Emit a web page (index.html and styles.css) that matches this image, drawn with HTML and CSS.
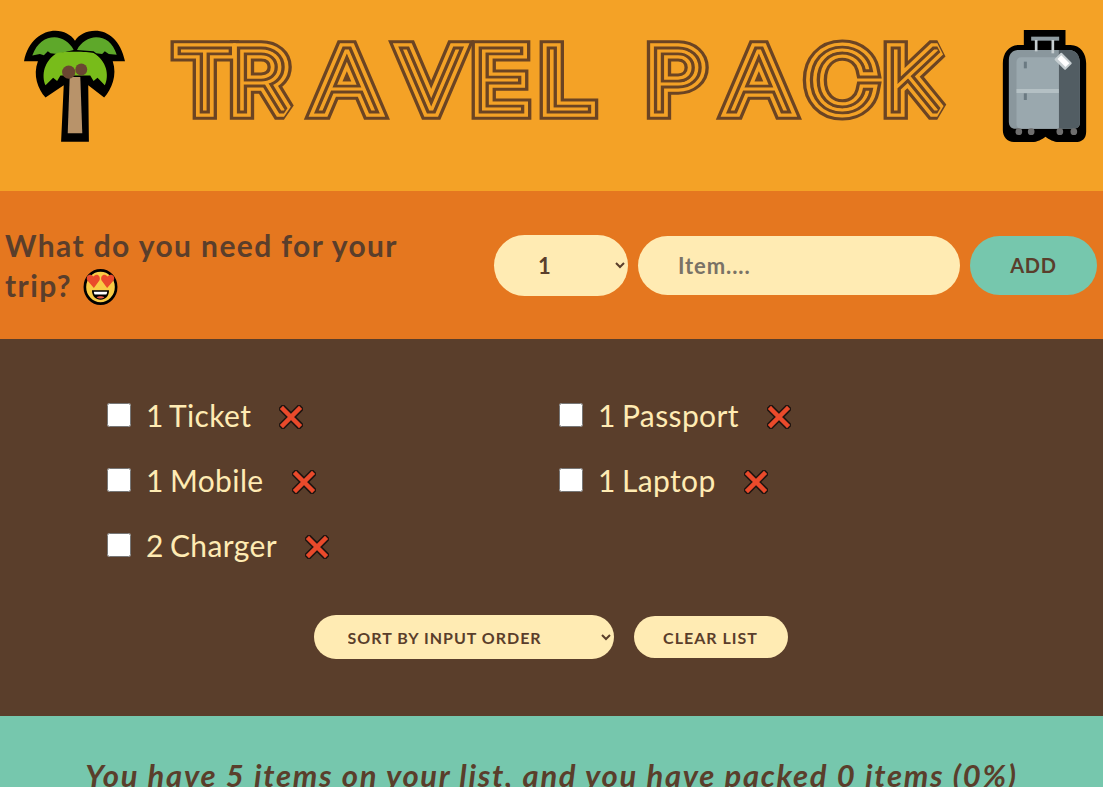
FILE: index.html
```html
<!DOCTYPE html>
<html lang="en">
<head>
<meta charset="utf-8">
<title>Travel Pack</title>
<link rel="stylesheet" href="styles.css">
</head>
<body>
<div class="app">
  <header class="banner">
    <svg class="palm" viewBox="40 28 305 338" aria-hidden="true">
      <path fill="#000" d="M40 122 C52 60 95 30 135 30 C160 30 182 42 194 60 C206 42 228 30 255 30 C295 30 332 60 345 122 L308 122 C322 165 305 205 282 232 L234 195 L236 365 L152 365 L160 195 L105 232 C82 205 66 165 82 122 Z"/>
      <path fill="#5ea82a" d="M65 105 C80 65 105 50 132 50 C155 50 178 65 190 88 L140 100 L120 98 L112 92 L100 104 L88 100 Z"/>
      <path fill="#5ea82a" d="M200 88 C212 65 235 50 258 50 C285 50 308 65 320 103 L296 100 L284 92 L276 100 L258 98 L250 92 Z"/>
      <path fill="#78bc1a" d="M105 195 C92 165 100 120 140 97 C160 92 230 92 250 97 C290 120 298 165 284 195 L262 172 L250 182 L240 165 L150 165 L140 182 L128 172 Z"/>
      <path fill="#b8936a" d="M178 170 L210 170 L216 340 L172 340 Z"/>
      <circle cx="175" cy="155" r="20" fill="#6a4632"/>
      <circle cx="213" cy="147" r="18" fill="#6a4632"/>
    </svg>
    <h1 class="title">
      <svg class="title-art" viewBox="0 0 800 100">
        <g transform="scale(1.15 1)">
          <use href="#title-text" class="ring ring-a"/>
          <use href="#title-text" class="ring ring-b"/>
          <use href="#title-text" class="ring ring-c"/>
          <use href="#title-text" class="ring ring-d"/>
          <text id="title-text" class="title-text" y="70.300" x="11 58.400 133.700 207 268.700 327.800 400 421 492 560 627">TRAVEL PACK</text>
        </g>
      </svg>
    </h1>
    <svg class="bag" viewBox="37 30 250 336" aria-hidden="true">
      <path fill="#000" d="M100 30 H225 V75 H240 C270 75 287 100 287 130 V335 C287 355 275 366 255 366 H205 C190 366 175 358 165 350 C155 358 140 366 125 366 H70 C50 366 37 350 37 330 V130 C37 100 55 75 85 75 H100 Z"/>
      <path fill="#8a979d" d="M85 90 H235 C255 90 268 105 268 130 V310 C268 320 260 326 250 326 H75 C62 326 55 318 55 305 V120 C55 100 68 90 85 90 Z"/>
      <path fill="#525d63" d="M205 90 H235 C255 90 268 105 268 130 V310 C268 320 260 326 250 326 H205 Z"/>
      <path fill="#9aa8ae" d="M92 112 H205 V326 H90 C82 326 78 320 78 312 V126 C78 118 84 112 92 112 Z"/>
      <rect x="78" y="207" width="127" height="12" fill="#b4c0c4"/>
      <rect x="100" y="125" width="9" height="20" fill="#6b7a82"/>
      <rect x="100" y="220" width="9" height="20" fill="#6b7a82"/>
      <rect x="122" y="50" width="84" height="12" fill="#8e9ba1"/>
      <rect x="133" y="60" width="8" height="34" fill="#c6ced1"/>
      <rect x="183" y="60" width="8" height="40" fill="#c6ced1"/>
      <g transform="rotate(45 218 124)"><rect x="195" y="109" width="46" height="30" rx="3" fill="#c6ced1"/><rect x="201" y="115" width="34" height="16" fill="#fff"/></g>
      <circle cx="85" cy="335" r="10" fill="#6e6e6e"/><circle cx="122" cy="335" r="10" fill="#6e6e6e"/>
      <circle cx="208" cy="335" r="10" fill="#6e6e6e"/><circle cx="250" cy="335" r="10" fill="#6e6e6e"/>
    </svg>
  </header>

  <form class="add-form">
    <h3 class="prompt">What do you need for your trip?
      <svg class="face" viewBox="0 0 36 38" aria-hidden="true">
        <ellipse cx="18" cy="19" rx="16.500" ry="17.500" fill="#f9cb45" stroke="#000" stroke-width="2.800"/>
        <path fill="#ea4a2b" d="M11 20 L4 12 C2 7 7 4 10.500 8 C14 4 18.500 7 17 12 Z"/>
        <path fill="#ea4a2b" d="M25 20 L19 12 C17.500 7 22 4 25.500 8 C29 4 34 7 32 12 Z"/>
        <path fill="#000" d="M9 22.500 H27 C27 29 23 32.500 18 32.500 C13 32.500 9 29 9 22.500 Z"/>
        <path fill="#fff" d="M11 24 H25 C25 25.500 24.500 26.500 24 27 H12 C11.500 26.500 11 25.500 11 24 Z"/>
        <path fill="#ea5a47" d="M14 30 C16 28.500 20 28.500 22 30 C20 31.500 16 31.500 14 30 Z"/>
      </svg>
    </h3>
    <div class="controls">
      <select class="pill qty"><option>1</option><option>2</option><option>3</option></select>
      <input class="pill item-input" type="text" placeholder="Item....">
      <button class="pill add-btn" type="button">ADD</button>
    </div>
  </form>

  <main class="list">
    <ul class="items">
      <li class="item"><input class="check" type="checkbox"><span>1 Ticket</span><button class="del" type="button" aria-label="Remove"><svg viewBox="0 0 24 24"><path class="x-o" d="M4 4 L20 20 M20 4 L4 20"/><path class="x-i" d="M4 4 L20 20 M20 4 L4 20"/></svg></button></li>
      <li class="item"><input class="check" type="checkbox"><span>1 Passport</span><button class="del" type="button" aria-label="Remove"><svg viewBox="0 0 24 24"><path class="x-o" d="M4 4 L20 20 M20 4 L4 20"/><path class="x-i" d="M4 4 L20 20 M20 4 L4 20"/></svg></button></li>
      <li class="item"><input class="check" type="checkbox"><span>1 Mobile</span><button class="del" type="button" aria-label="Remove"><svg viewBox="0 0 24 24"><path class="x-o" d="M4 4 L20 20 M20 4 L4 20"/><path class="x-i" d="M4 4 L20 20 M20 4 L4 20"/></svg></button></li>
      <li class="item"><input class="check" type="checkbox"><span>1 Laptop</span><button class="del" type="button" aria-label="Remove"><svg viewBox="0 0 24 24"><path class="x-o" d="M4 4 L20 20 M20 4 L4 20"/><path class="x-i" d="M4 4 L20 20 M20 4 L4 20"/></svg></button></li>
      <li class="item"><input class="check" type="checkbox"><span>2 Charger</span><button class="del" type="button" aria-label="Remove"><svg viewBox="0 0 24 24"><path class="x-o" d="M4 4 L20 20 M20 4 L4 20"/><path class="x-i" d="M4 4 L20 20 M20 4 L4 20"/></svg></button></li>
    </ul>
    <div class="actions">
      <select class="pill small sort"><option>SORT BY INPUT ORDER</option><option>SORT BY DESCRIPTION</option></select>
      <button class="pill small clear" type="button">CLEAR LIST</button>
    </div>
  </main>

  <footer class="stats"><em>You have 5 items on your list, and you have packed 0 items (0%)</em></footer>
</div>
</body>
</html>
```
FILE: styles.css
```css
* { box-sizing: border-box; margin: 0; padding: 0; }
html, body { height: 100%; overflow: hidden; }
body { font-family: "Lato", "Noto Sans", sans-serif; color: #5a3e2b; background: #76c7ad; }
.app { height: 787px; overflow: hidden; display: flex; flex-direction: column; }

.banner { height: 191px; background: #f4a226; display: flex; align-items: flex-start; padding: 30px 16px 0 24px; flex: none; }
.palm { width: 101px; height: 112px; flex: none; }
.title { margin: 10px 0 0 38px; line-height: 0; flex: none; }
.title-art { width: 800px; height: 100px; display: block; overflow: visible; }
.title-text { font-family: "Inter", "Lato", sans-serif; font-weight: 100; font-size: 82px; fill: #f4a226; }
.ring { stroke-linejoin: miter; stroke-miterlimit: 1.8; }
.ring-a { stroke: #6b4423; stroke-width: 19.300px; }
.ring-b { stroke: #f4a226; stroke-width: 13.500px; }
.ring-c { stroke: #6b4423; stroke-width: 7px; }
.ring-d { stroke: #f4a226; stroke-width: 1.200px; }
.bag { width: 85px; height: 112px; flex: none; margin-left: auto; }

.add-form { height: 148px; background: #e5771f; display: flex; align-items: center; padding: 0 6px 0 5px; flex: none; }
.prompt { width: 440px; font-size: 30px; font-weight: 700; line-height: 40px; letter-spacing: 1.4px; flex: none; }
.face { width: 35px; height: 36px; vertical-align: -8px; margin-left: 2px; }
.controls { display: flex; align-items: center; gap: 10px; margin-left: auto; }
.pill { border: none; border-radius: 999px; background: #ffebb3; color: #5a3e2b; font-family: inherit; font-weight: 700; }
.qty { width: 134px; height: 61px; font-size: 22px; padding-left: 40px; }
.item-input { width: 322px; height: 59px; font-size: 22px; letter-spacing: 0.9px; padding: 0 40px; }
.item-input::placeholder { color: #7a7266; }
.add-btn { width: 127px; height: 59px; background: #76c7ad; font-size: 20px; letter-spacing: 0.8px; }

.list { height: 377px; background: #5a3e2b; color: #ffebb3; flex: none; padding-top: 43px; }
.items { list-style: none; display: grid; grid-template-columns: 452px 1fr; grid-auto-rows: 65px; padding-left: 107px; height: 195px; }
.item { display: flex; align-items: center; font-size: 30px; letter-spacing: 0.4px; word-spacing: -2px; }
.check { width: 24px; height: 24px; margin-right: 15px; flex: none; }
.del { width: 24px; height: 24px; margin-left: 28px; margin-top: 5px; background: none; border: none; flex: none; }
.del svg { display: block; width: 24px; height: 24px; }
.x-o { fill: none; stroke: #1e1410; stroke-width: 7.500px; stroke-linecap: square; }
.x-i { fill: none; stroke: #ea4a2b; stroke-width: 4.500px; stroke-linecap: square; }

.actions { display: flex; align-items: center; justify-content: center; gap: 20px; margin-top: 38px; padding-right: 2px; }
.small { font-size: 16px; letter-spacing: 1px; }
.sort { width: 300px; height: 44px; padding-left: 30px; }
.clear { width: 154px; height: 42px; }

.stats { height: 100px; background: #76c7ad; text-align: center; padding-top: 41px; font-size: 31px; line-height: 36px; font-weight: 700; letter-spacing: 1.700px; white-space: nowrap; flex: none; }
```
